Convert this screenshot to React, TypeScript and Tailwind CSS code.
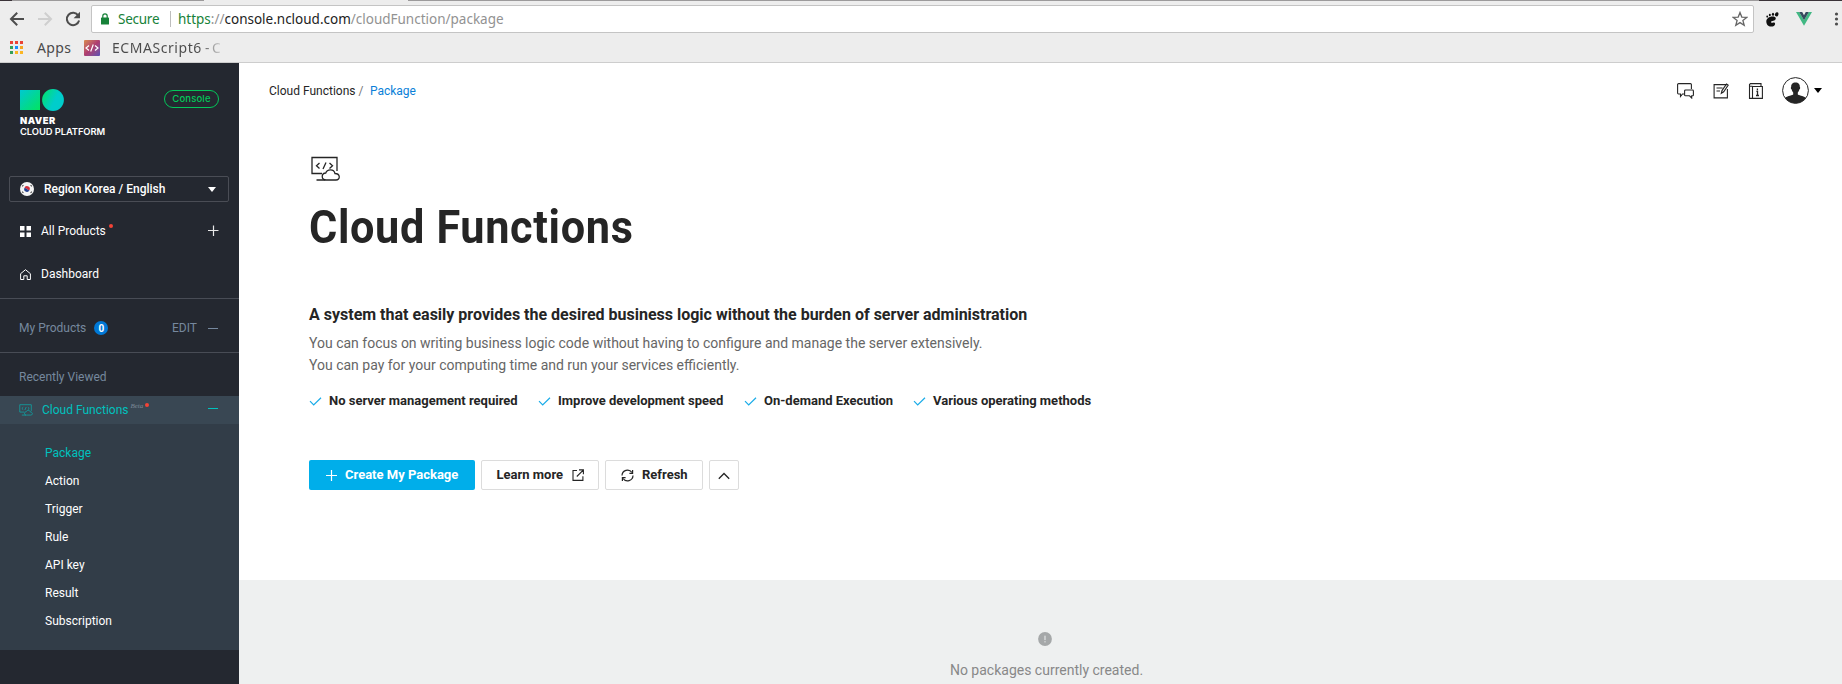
import type { ReactNode } from "react";

const menu = ["Package", "Action", "Trigger", "Rule", "API key", "Result", "Subscription"];

const appColors = [
  "#ea4335", "#ea4335", "#ea4335",
  "#34a058", "#1a8cff", "#f5a623",
  "#34a058", "#fbb624", "#fbb624",
];

function BrowserChrome() {
  return (
    <header className="flex h-[63px] flex-col border-b border-[#cdcdcd] bg-[#ededed] font-['Noto_Sans','Open_Sans',sans-serif]">
      <div className="flex h-px">
        <div className="w-[12px] bg-[#3a3338]" />
        <div className="w-[192px] bg-[#9c9a9b]" />
        <div className="w-[204px]" />
        <div className="flex-1 bg-[#9c9a9b]" />
        <div className="w-[83px] bg-[#3a3338]" />
      </div>
      <div className="flex h-[36px] items-center">
        <svg className="ml-[9px] h-4 w-[16px] shrink-0" viewBox="0 0 16 16" fill="none" stroke="#4d4d4d" strokeWidth="2">
          <path d="M15 8H2.500M8.200 1.800L2 8l6.200 6.200" />
        </svg>
        <svg className="ml-[12px] h-4 w-[16px] shrink-0" viewBox="0 0 16 16" fill="none" stroke="#cfcfcf" strokeWidth="2">
          <path d="M1 8h12.500M7.800 1.800L14 8l-6.200 6.200" />
        </svg>
        <svg className="ml-[12px] h-4 w-4 shrink-0" viewBox="0 0 16 16" fill="none">
          <path d="M13.300 4.600A6.200 6.200 0 1 0 14.100 9.500" stroke="#4d4d4d" strokeWidth="2" />
          <path d="M15 .8v6.400H8.600z" fill="#4d4d4d" />
        </svg>
        <div className="ml-[10px] flex h-[28px] w-[1663px] shrink-0 items-center rounded-[2px] border border-[#c4c4c4] bg-white pl-[9px] text-[14px]">
          <svg className="h-[12px] w-[8px]" viewBox="0 0 8 12">
            <path d="M1.800 5V3a2.200 2.200 0 0 1 4.400 0v2" fill="none" stroke="#178239" strokeWidth="1.200" />
            <rect y="4.500" width="8" height="7" rx=".6" fill="#178239" />
          </svg>
          <span className="ml-[9px] w-[52px] text-[13.500px] tracking-[-0.250px] text-[#178239]">Secure</span>
          <span className="h-[16px] w-px bg-[#bdbdbd]" />
          <span className="ml-[7px] whitespace-nowrap text-[13.500px] tracking-[-0.005px] text-[#929292]">
            <span className="text-[#178239]">https</span>://<span className="text-[#222]">console.ncloud.com</span>/cloudFunction/package
          </span>
          <svg className="mr-[5px] ml-auto h-[16px] w-[16px]" viewBox="0 0 16 16" fill="none" stroke="#666" strokeWidth="1.300">
            <path d="M8 1.500l1.800 4.600 4.900.3-3.800 3.100 1.300 4.800L8 11.600l-4.200 2.700 1.300-4.800-3.800-3.100 4.900-.3z" />
          </svg>
        </div>
        <svg className="ml-[11px] h-[15px] w-[14px] shrink-0" viewBox="0 0 14 15" fill="#111">
          <path d="M7.500 4.600C4 4.600 1.300 6.800 1.300 9.500c0 3 2.100 5 4.700 5 2.300 0 4.100-1 4.100-2.600 0-1.300-1.200-1.500-2.300-1.200-1.200.3-1.900.1-1.900-.6 0-1.300 4.900-1.100 4.900-3.600 0-1.300-1.400-1.900-3.300-1.900z" />
          <ellipse cx="11.700" cy="2.300" rx="1.700" ry="2.100" transform="rotate(20 11.700 2.300)" />
          <ellipse cx="8" cy="2.200" rx="1.100" ry="1.500" />
          <ellipse cx="4.800" cy="3" rx="1" ry="1.300" />
          <ellipse cx="2.200" cy="4.600" rx=".9" ry="1.100" />
        </svg>
        <svg className="ml-[17px] h-[14px] w-[16px] shrink-0" viewBox="0 0 16 14">
          <path d="M0 0h3.200L8 8.300 12.800 0H16L8 13.800z" fill="#41b883" />
          <path d="M3.200 0h3L8 3.200 9.800 0h3L8 8.300z" fill="#35495e" />
        </svg>
        <svg className="ml-[22px] h-[14px] w-[5px] shrink-0" viewBox="0 0 5 14" fill="#4d4d4d">
          <circle cx="2.500" cy="2" r="1.600" />
          <circle cx="2.500" cy="7" r="1.600" />
          <circle cx="2.500" cy="12" r="1.600" />
        </svg>
      </div>
      <div className="flex h-[21px] items-center text-[14px] text-[#4a4a4a]">
        <div className="ml-[10px] grid grid-cols-3 gap-[2px]">
          {appColors.map((c, i) => (
            <span key={i} className="size-[3px]" style={{ backgroundColor: c }} />
          ))}
        </div>
        <span className="ml-[14px] w-[47px] tracking-[0.400px]">Apps</span>
        <span className="flex size-4 items-center justify-center rounded-[1px] bg-linear-to-br from-[#d98a4a] via-[#ae3c70] to-[#5a4fb5]">
          <svg className="size-[14px]" viewBox="0 0 14 14" fill="none" stroke="#fff" strokeWidth="1.200">
            <path d="M4 4.500L1 7l3 2.500M10 4.500L13 7l-3 2.500M8.300 3.500l-2.600 7" />
          </svg>
        </span>
        <span className="ml-[12px] bg-linear-to-r from-[#4a4a4a] from-80% to-[#ededed] to-105% bg-clip-text whitespace-nowrap text-transparent">
          <span className="tracking-[0.550px]">ECMAScript6</span>
          <span className="tracking-[-0.500px]"> - C</span>
        </span>
      </div>
    </header>
  );
}

function FunctionIcon({ className }: { className: string }) {
  return (
    <svg className={className} viewBox="0 0 30 26" fill="none" stroke="currentColor" strokeWidth="1.300">
      <path d="M11.500 17.500H1.500V1.500H26.500V15M6 24h9" />
      <path d="M9 7L6 9.700 9 12.400M19 7l3 2.700-3 2.700M15.500 6.500l-3 6.500" />
      <path d="M15.500 24C10.500 24 10.500 17.300 15.300 17 16.500 12.800 23.500 12.500 24.500 17.500 30 17.500 30 24 25.500 24z" />
    </svg>
  );
}

function Sidebar() {
  return (
    <aside className="flex w-[239px] shrink-0 flex-col bg-[#242830] text-[12px] text-white">
      <div className="flex h-[113px] justify-between pt-[26px] pr-[20px] pl-[20px]">
        <div>
          <svg className="h-[22px] w-[44px]" viewBox="0 0 44 22">
            <defs>
              <linearGradient id="sq" x1="0" y1="0" x2="1" y2="1">
                <stop offset="0" stopColor="#00c8d2" />
                <stop offset="1" stopColor="#03e45f" />
              </linearGradient>
              <linearGradient id="ci" x1="0" y1=".2" x2="1" y2=".7">
                <stop offset="0" stopColor="#03e070" />
                <stop offset=".6" stopColor="#00cdcb" />
              </linearGradient>
            </defs>
            <rect y="1" width="20" height="20" fill="url(#sq)" />
            <circle cx="33" cy="11" r="10.900" fill="url(#ci)" />
          </svg>
          <div className="mt-[5px] font-['Inter',sans-serif] text-[9.400px] leading-[10.500px]">
            <div className="font-black tracking-[0.500px]">NAVER</div>
            <div className="font-semibold tracking-[-0.080px] whitespace-nowrap">CLOUD PLATFORM</div>
          </div>
        </div>
        <span className="mt-px flex h-[18px] w-[55px] items-center justify-center rounded-full border border-[#03c75a] font-['Inter',sans-serif] text-[9.500px] font-medium tracking-[0.150px] text-[#03c75a]">
          Console
        </span>
      </div>
      <div className="mr-[10px] ml-[9px] flex h-[26px] items-center rounded-[2px] border border-[#4a4d55] pr-[12px] pl-[10px]">
        <svg className="size-[14px]" viewBox="0 0 14 14">
          <circle cx="7" cy="7" r="7" fill="#f4f4f4" />
          <path d="M4.300 6.200a2.800 2.800 0 0 1 5.400 1.600C8.600 9 7.800 7.500 7 7S5 5.500 4.300 6.200z" fill="#d22f3c" />
          <path d="M4.300 6.200a2.800 2.800 0 0 0 5.400 1.600C8.600 9 7.800 7.500 7 7S5 5.500 4.300 6.200z" fill="#24408e" />
          <path d="M2.200 4.300L3.400 3M10.600 3L11.800 4.300M2.200 9.700l1.200 1.300M10.600 11L11.800 9.700" stroke="#444" strokeWidth="1.100" />
        </svg>
        <span className="ml-[10px] font-medium">Region Korea / English</span>
        <svg className="ml-auto h-[5px] w-[8px]" viewBox="0 0 8 5" fill="#fff">
          <path d="M0 0h8L4 5z" />
        </svg>
      </div>
      <div className="flex h-[43px] items-center px-[20px] pt-[14px]">
        <svg className="mt-px size-[11px]" viewBox="0 0 11 11" fill="#fff">
          <path d="M0 0h4.500v4.500H0zM6.500 0H11v4.500H6.500zM0 6.500h4.500V11H0zM6.500 6.500H11V11H6.500z" />
        </svg>
        <span className="ml-[10px]">All Products</span>
        <span className="mb-[9px] ml-[3px] size-[4px] rounded-full bg-[#f44336]" />
        <svg className="mb-px ml-auto size-[11px]" viewBox="0 0 11 11" stroke="#e8e8e8" strokeWidth="1.200">
          <path d="M0 5.500h10.500M5.500 0.500v10.500" />
        </svg>
      </div>
      <div className="flex h-[54px] items-center border-b border-[#484c55] px-[20px] pt-[4px]">
        <svg className="mt-[2px] size-[11px]" viewBox="0 0 11 11" fill="none" stroke="#fff">
          <path d="M.6 4.700L5.500.7l4.900 4V10.500H7.200V6.800H3.800v3.700H.6z" />
        </svg>
        <span className="ml-[10px]">Dashboard</span>
      </div>
      <div className="flex h-[54px] items-center border-b border-[#484c55] pt-[5px] pr-[21px] pl-[19px] text-[#76889e]">
        <span>My Products</span>
        <span className="ml-[8px] flex size-[14px] items-center justify-center rounded-full bg-[#0078d6] text-[10px] font-bold text-white">0</span>
        <span className="mr-[11px] ml-auto">EDIT</span>
        <span className="h-px w-[10px] bg-[#76889e]" />
      </div>
      <div className="flex h-[43px] items-center pt-[5px] pl-[19px] text-[#76889e]">Recently Viewed</div>
      <div className="flex h-[28px] shrink-0 items-center bg-[#394753] pr-[21px] pl-[19px] text-[#00c1be]">
        <FunctionIcon className="h-[12px] w-[14px]" />
        <span className="ml-[9px]">Cloud Functions</span>
        <span className="mb-[8px] ml-[2px] font-['Liberation_Serif',serif] text-[7px] text-[#7c8a98] italic">Beta</span>
        <span className="mb-[10px] ml-[2px] size-[4px] rounded-full bg-[#f44336]" />
        <span className="mb-[3px] ml-auto h-px w-[10px] bg-[#00c1be]" />
      </div>
      <nav className="flex flex-col bg-[#323d48] py-[15px] pl-[45px]">
        {menu.map((m, i) => (
          <span key={m} className={i === 0 ? "h-[28px] leading-[28px] text-[#00c1be]" : "h-[28px] leading-[28px]"}>
            {m}
          </span>
        ))}
      </nav>
    </aside>
  );
}

function Feature({ width, children }: { width: string; children: ReactNode }) {
  return (
    <div className={`flex items-center ${width}`}>
      <svg className="h-[9px] w-[13px]" viewBox="0 0 13 9" fill="none" stroke="#1aace8" strokeWidth="1.200">
        <path d="M1 4.200L4.700 8 12 .8" />
      </svg>
      <span className="ml-[7px] whitespace-nowrap">{children}</span>
    </div>
  );
}

function Main() {
  return (
    <main className="flex min-w-0 flex-1 flex-col bg-white text-[#252525]">
      <div className="flex h-[55px] items-center pr-[20px] pl-[30px] text-[12px]">
        <span>Cloud Functions</span>
        <span className="ml-[3px] text-[#777]">/</span>
        <span className="ml-[6.500px] text-[#0b7fd8]">Package</span>
        <svg className="ml-auto h-[16px] w-[17px]" viewBox="0 0 17 16" fill="none" stroke="#252525" strokeWidth="1.100">
          <path d="M7.500 11H5.500L3.500 13.500V11H1.500A1 1 0 0 1 .6 10V1.600A1 1 0 0 1 1.600.6H13.400A1 1 0 0 1 14.400 1.600V6" />
          <path d="M8.500 7H15.500a.9.900 0 0 1 .9.900v4a.9.900 0 0 1-.9.900H14.700V15L12.500 12.800H8.500a.9.900 0 0 1-.9-.9V7.900A.9.900 0 0 1 8.500 7z" />
        </svg>
        <svg className="ml-[19px] h-[16px] w-[16px]" viewBox="0 0 16 16" fill="none" stroke="#252525" strokeWidth="1.100">
          <path d="M14.400 6v8.900H1.100V1.600H14.400" />
          <path d="M3.500 5h6M3.500 8h3.500M8.300 10.300L9 7.600 13.500.9l1.700 1.200-4.500 6.700z" />
        </svg>
        <svg className="ml-[19px] h-[16px] w-[16px]" viewBox="0 0 16 16" fill="none" stroke="#252525" strokeWidth="1.100">
          <path d="M4.500 3.500H14.400V15.400H4.500zM4.500 15.400H1.500V1.600L2.500.6H13V3.500M1.500 3.300H4.500" />
          <path d="M9.400 5.600v1.600M8.400 8.400h1.100v4M8 12.500h3" strokeWidth="1.300" />
        </svg>
        <svg className="ml-[18px] size-[27px]" viewBox="0 0 27 27">
          <defs>
            <clipPath id="av"><circle cx="13.500" cy="13.500" r="12.800" /></clipPath>
          </defs>
          <g clipPath="url(#av)" fill="#252525">
            <path d="M13.500 5.500c-2.900 0-4.600 2-4.300 4.500-.7.200-.4 2.300.5 2.500.3 1.400.9 2.300 1.500 2.900v2.200C9 19 4.500 18.800 2.500 22v5h22v-5c-2-3.200-6.500-3-8.700-4.400v-2.200c.6-.6 1.200-1.500 1.500-2.900.9-.2 1.200-2.300.5-2.500.3-2.500-1.400-4.500-4.300-4.500z" />
          </g>
          <circle cx="13.500" cy="13.500" r="12.900" fill="none" stroke="#252525" />
        </svg>
        <svg className="ml-[5px] h-[5px] w-[8px]" viewBox="0 0 8 5"><path d="M0 0h8L4 5z" /></svg>
      </div>
      <section className="flex h-[462px] shrink-0 flex-col pt-[38px] pl-[70px]">
        <FunctionIcon className="ml-px h-[26px] w-[31px] shrink-0" />
        <h1 className="mt-[17px] h-[56px] origin-left scale-x-[0.94] text-[46px] leading-[56px] font-bold tracking-[0.700px] whitespace-nowrap">Cloud Functions</h1>
        <h2 className="mt-[49px] h-[22px] text-[16px] leading-[22px] font-bold whitespace-nowrap">
          A system that easily provides the desired business logic without the burden of server administration
        </h2>
        <p className="mt-[6px] text-[14px] leading-[22px] whitespace-nowrap text-[#666]">
          You can focus on writing business logic code without having to configure and manage the server extensively.
          <br />
          You can pay for your computing time and run your services efficiently.
        </p>
        <div className="mt-[14px] flex h-[22px] text-[13px] font-bold">
          <Feature width="w-[229px]">No server management required</Feature>
          <Feature width="w-[206px]">Improve development speed</Feature>
          <Feature width="w-[169px]">On-demand Execution</Feature>
          <Feature width="w-[200px]">Various operating methods</Feature>
        </div>
        <div className="mt-[48px] flex gap-[6px] text-[13px] font-bold">
          <button className="flex h-[30px] w-[166px] items-center rounded-[2px] bg-[#00aeea] pl-[17px] text-white">
            <svg className="size-[11px]" viewBox="0 0 11 11" stroke="#fff" strokeWidth="1.200"><path d="M0 5.500h11M5.500 0v11" /></svg>
            <span className="ml-[8px] whitespace-nowrap">Create My Package</span>
          </button>
          <button className="flex h-[30px] w-[118px] items-center rounded-[2px] border border-[#dcdcdc] pl-[14.500px]">
            <span className="whitespace-nowrap">Learn more</span>
            <svg className="ml-[8.500px] size-[12px]" viewBox="0 0 12 12" fill="none" stroke="#252525" strokeWidth="1.100">
              <path d="M5 1.500H1v9.900h9.900V7.300M4.800 7.500L11 1.300M7 .9h4.400v4.400" />
            </svg>
          </button>
          <button className="flex h-[30px] w-[98px] items-center rounded-[2px] border border-[#dcdcdc] pl-[15px]">
            <svg className="size-[13px]" viewBox="0 0 13 13" fill="none" stroke="#252525" strokeWidth="1.200">
              <path d="M1 6.500A5.500 5.500 0 0 1 11 3.500M12 6.500A5.500 5.500 0 0 1 2 9.500" />
              <path d="M11.600.9v3.400H8.400M1.400 12.100V8.700h3.200" />
            </svg>
            <span className="ml-[8px]">Refresh</span>
          </button>
          <button className="flex size-[30px] items-center justify-center rounded-[2px] border border-[#dcdcdc]">
            <svg className="mt-[2px] h-[8px] w-[12px]" viewBox="0 0 12 8" fill="none" stroke="#252525" strokeWidth="1.300"><path d="M.8 6.800L6 1.500l5.200 5.300" /></svg>
          </button>
        </div>
      </section>
      <section className="flex flex-1 flex-col items-center bg-[#eef0f0] pt-[52px] pl-[12px] text-[#888]">
        <svg className="mr-[4px] size-[14px] shrink-0" viewBox="0 0 14 14">
          <circle cx="7" cy="7" r="6.900" fill="#a5a8a9" />
          <path d="M7 3.700v4.400M7 9.200v1.200" stroke="#eef0f0" />
        </svg>
        <p className="mt-[14px] text-[14px] leading-[20px]">No packages currently created.</p>
      </section>
    </main>
  );
}

export default function App() {
  return (
    <div className="flex h-[684px] w-[1842px] flex-col overflow-hidden font-['Roboto',sans-serif]">
      <BrowserChrome />
      <div className="flex min-h-0 flex-1">
        <Sidebar />
        <Main />
      </div>
    </div>
  );
}
